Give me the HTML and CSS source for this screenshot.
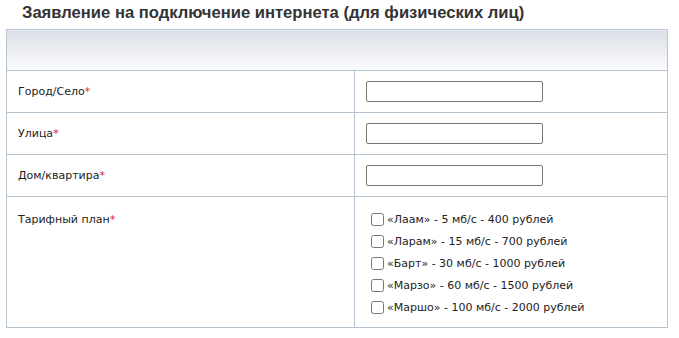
FILE: index.html
```html
<!DOCTYPE html>
<html>
<head>
	<meta charset="utf-8"/>
	<title>Заявление на подключение интернета</title>
	<link rel="stylesheet" href="styles.css">
</head>
<body>
<div class="page">
	<h2 class="form-title">Заявление на подключение интернета (для физических лиц)</h2>

	<table class="form-table">
		<colgroup>
			<col class="col-label">
			<col class="col-field">
		</colgroup>
		<tr>
			<th class="form-head" colspan="2"></th>
		</tr>
		<tr class="f-row">
			<td class="f-label">Город/Село<span class="req">*</span></td>
			<td class="f-field"><input type="text" class="f-input" name="city"></td>
		</tr>
		<tr class="f-row">
			<td class="f-label">Улица<span class="req">*</span></td>
			<td class="f-field"><input type="text" class="f-input" name="street"></td>
		</tr>
		<tr class="f-row">
			<td class="f-label">Дом/квартира<span class="req">*</span></td>
			<td class="f-field"><input type="text" class="f-input" name="house"></td>
		</tr>
		<tr class="f-row">
			<td class="f-label top">
				<div class="plan-line">Тарифный план<span class="req">*</span></div>
			</td>
			<td class="f-field top plans">
				<label class="plan-line"><input type="checkbox" name="plan" value="1">«Лаам» - 5 мб/с - 400 рублей</label>
				<label class="plan-line"><input type="checkbox" name="plan" value="2">«Ларам» - 15 мб/с - 700 рублей</label>
				<label class="plan-line"><input type="checkbox" name="plan" value="3">«Барт» - 30 мб/с - 1000 рублей</label>
				<label class="plan-line"><input type="checkbox" name="plan" value="4">«Марзо» - 60 мб/с - 1500 рублей</label>
				<label class="plan-line"><input type="checkbox" name="plan" value="5">«Маршо» - 100 мб/с - 2000 рублей</label>
			</td>
		</tr>
	</table>
</div>
</body>
</html>
```

FILE: styles.css
```css
	body{
		margin: 0;
		background: #fff;
		font-family: "DejaVu Sans", Verdana, sans-serif;
		font-size: 11px;
		color: #222;
	}
	.page{
		padding: 0 6px;
	}
	.form-title{
		margin: 4px 0 7px 16px;
		font-family: "Liberation Sans", Arial, sans-serif;
		font-size: 16.6px;
		line-height: 18px;
		font-weight: bold;
		color: #333;
	}

	.form-table{
		width: 662px;
		border-collapse: collapse;
		table-layout: fixed;
	}
	.col-label{
		width: 348px;
	}
	.form-table td, .form-table th{
		border: 1px solid #b6c4d2;
		padding: 0;
	}
	.form-head{
		height: 40px;
		background: linear-gradient(to bottom, #dadee6 0%, #eceef2 50%, #fbfbfc 100%);
	}
	.f-label{
		padding: 0 0 0 11px !important;
		vertical-align: middle;
	}
	.f-field{
		padding: 10px 11px !important;
		vertical-align: middle;
	}
	.top{
		vertical-align: top;
	}
	.f-label.top{
		padding-top: 11px !important;
	}
	.f-field.plans{
		padding: 11px 11px 9px 11px !important;
	}
	.req{
		color: #e2231a;
	}
	.f-input{
		display: block;
		box-sizing: border-box;
		width: 177px;
		height: 21px;
		margin: 0;
		border: 1px solid #767676;
		border-radius: 2px;
		padding: 1px 2px;
	}
	.plan-line{
		display: flex;
		align-items: center;
		height: 22px;
	}
	.plan-line input{
		width: 13px;
		height: 13px;
		margin: 0 3px 0 5px;
	}
```
